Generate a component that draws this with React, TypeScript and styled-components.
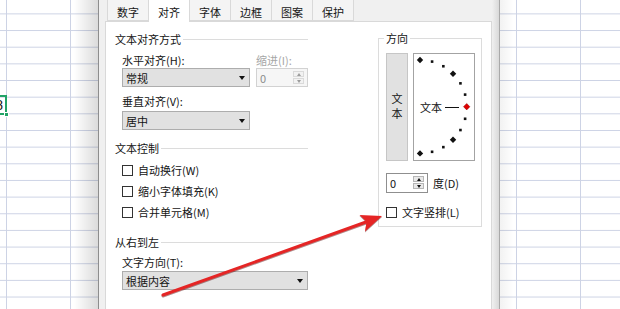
import React from "react";
import styled, { createGlobalStyle } from "styled-components";

const FONT = `"Noto Sans CJK SC", "Noto Sans", sans-serif`;
const GRID = "#cdd3e5";
const GREEN = "#21a366";

const GlobalStyle = createGlobalStyle`
  html, body { margin: 0; padding: 0; background: #fff; }
  body { font-family: ${FONT}; font-size: 11px; line-height: 16px; color: #141414; }
  * { box-sizing: border-box; }
`;

const Screen = styled.div`
  position: relative;
  display: flex;
  width: 620px;
  height: 309px;
  overflow: hidden;
`;

const colLines = (cols: number[]) =>
  `linear-gradient(to right, ${cols
    .map((c) => `transparent ${c}px, ${GRID} ${c}px, ${GRID} ${c + 1}px, transparent ${c + 1}px`)
    .join(", ")})`;

const Sheet = styled.div<{ $width?: number; $cols: number[]; $shade: string }>`
  position: relative;
  flex: ${(p) => (p.$width ? `0 0 ${p.$width}px` : "1")};
  height: 100%;
  overflow: hidden;
  background-color: #fff;
  background-image: ${(p) => p.$shade}, ${(p) => colLines(p.$cols)},
    linear-gradient(to bottom, ${GRID} 1px, transparent 1px);
  background-size: 100% 100%, 100% 100%, 100% 16.667px;
  background-repeat: no-repeat, no-repeat, repeat;
  background-position: 0 0, 0 0, 0 13.4px;
`;

const ActiveCell = styled.div`
  position: absolute;
  left: -12px;
  top: 95px;
  width: 19px;
  height: 20px;
  padding-right: 2px;
  border: 2px solid ${GREEN};
  font-family: "Liberation Sans", Arial, sans-serif;
  font-size: 14px;
  line-height: 16px;
  text-align: right;
`;

const FillHandle = styled.span`
  position: absolute;
  right: -4px;
  bottom: -4px;
  width: 5px;
  height: 5px;
  border: 1px solid #fff;
  background: ${GREEN};
`;

const Dialog = styled.div`
  flex: 0 0 402px;
  display: flex;
  flex-direction: column;
  padding: 0 7px 0 6px;
  border-left: 1px solid #8d8d8d;
  border-right: 1px solid #a9a9a9;
  background: linear-gradient(to right, #f0f0f0 393px, #d9d9d9 400px);
`;

const TabRow = styled.div`
  display: flex;
  height: 21px;
  padding-left: 2px;
`;

const Tab = styled.div<{ $active?: boolean }>`
  position: relative;
  z-index: ${(p) => (p.$active ? 1 : 0)};
  width: 42px;
  height: ${(p) => (p.$active ? 25 : 24)}px;
  margin: -3px 0 0 -1px;
  padding-top: 6px;
  border: 1px solid #d9d9d9;
  border-bottom: ${(p) => (p.$active ? "none" : "1px solid #d9d9d9")};
  background: ${(p) => (p.$active ? "#fff" : "#f4f4f4")};
  text-align: center;
  &:first-child {
    margin-left: 0;
  }
`;

const Panel = styled.div`
  flex: 1;
  width: 387px;
  display: grid;
  grid-template-columns: 193px 104px;
  column-gap: 70px;
  align-items: start;
  padding: 9px 0 0 9px;
  border: 1px solid #d9d9d9;
  border-bottom: none;
  background: #fff;
`;

const Column = styled.div`
  display: flex;
  flex-direction: column;
`;

const Heading = styled.div<{ $mt?: number }>`
  display: flex;
  align-items: center;
  height: 16px;
  margin-top: ${(p) => p.$mt ?? 0}px;
  white-space: nowrap;
  &::after {
    content: "";
    flex: 1;
    height: 1px;
    margin-left: 2px;
    background: #dcdcdc;
  }
`;

const Indent = styled.div`
  display: flex;
  flex-direction: column;
  padding-left: 7px;
`;

const FieldPair = styled.div`
  display: grid;
  grid-template-columns: 128px 52px;
  column-gap: 6px;
`;

const Label = styled.div<{ $mt?: number; $disabled?: boolean }>`
  height: 16px;
  margin-top: ${(p) => p.$mt ?? 0}px;
  color: ${(p) => (p.$disabled ? "#a6a6a6" : "inherit")};
  white-space: nowrap;
`;

const Select = styled.div<{ $w: number; $mt?: number }>`
  display: flex;
  align-items: center;
  justify-content: space-between;
  width: ${(p) => p.$w}px;
  height: 19px;
  margin-top: ${(p) => p.$mt ?? 0}px;
  padding: 0 4px 0 3px;
  border: 1px solid #adadad;
  background: #e1e1e1;
  &::after {
    content: "";
    border-left: 3.5px solid transparent;
    border-right: 3.5px solid transparent;
    border-top: 4px solid #111;
  }
`;

const Spin = styled.div<{ $w: number; $h: number; $disabled?: boolean }>`
  display: flex;
  align-items: center;
  justify-content: space-between;
  width: ${(p) => p.$w}px;
  height: ${(p) => p.$h}px;
  padding: 0 3px 0 3px;
  border: 1px solid ${(p) => (p.$disabled ? "#d2d2d2" : "#8f8f8f")};
  background: ${(p) => (p.$disabled ? "#f6f6f6" : "#fff")};
  color: ${(p) => (p.$disabled ? "#8c8c8c" : "inherit")};
`;

const Steppers = styled.div`
  display: flex;
  flex-direction: column;
  gap: 1px;
`;

const Step = styled.div<{ $down?: boolean; $disabled?: boolean }>`
  display: flex;
  align-items: center;
  justify-content: center;
  width: 11px;
  height: 6px;
  border: 1px solid ${(p) => (p.$disabled ? "#dadada" : "#b5b5b5")};
  background: ${(p) => (p.$disabled ? "#f2f2f2" : "#e9e9e9")};
  &::before {
    content: "";
    border-left: 2.5px solid transparent;
    border-right: 2.5px solid transparent;
    ${(p) => (p.$down ? "border-top" : "border-bottom")}: 3px solid
      ${(p) => (p.$disabled ? "#9c9c9c" : "#111")};
  }
`;

const CheckRow = styled.div<{ $mt?: number }>`
  display: flex;
  align-items: center;
  gap: 5px;
  height: 16px;
  margin-top: ${(p) => p.$mt ?? 0}px;
  white-space: nowrap;
`;

const Box = styled.span`
  flex: none;
  width: 11px;
  height: 11px;
  border: 1px solid #333;
  background: #fff;
`;

const Group = styled.div`
  display: flex;
  flex-direction: column;
  margin-top: 7px;
  padding: 0 6px 6px 7px;
  border: 1px solid #dcdcdc;
`;

const Legend = styled.div`
  align-self: flex-start;
  height: 16px;
  margin: -9px 0 0 -2px;
  padding: 0 2px;
  background: #fff;
`;

const OrientRow = styled.div`
  display: flex;
  gap: 5px;
  height: 108px;
  margin-top: 7px;
`;

const VerticalText = styled.div`
  display: flex;
  flex-direction: column;
  align-items: center;
  justify-content: center;
  width: 22px;
  padding-bottom: 2px;
  border: 1px solid #c6c6c6;
  background: #e1e1e1;
  line-height: 15px;
`;

const Dial = styled.div`
  position: relative;
  display: flex;
  align-items: center;
  width: 62px;
  padding-left: 6px;
  border: 1px solid #a3a3a3;
  background: #fff;
`;

const DialMarks = styled.svg`
  position: absolute;
  left: 0;
  top: 0;
`;

const Needle = styled.span`
  width: 14px;
  height: 1px;
  margin-left: 3px;
  background: #111;
`;

const DegreeRow = styled.div`
  display: flex;
  align-items: center;
  gap: 5px;
  height: 20px;
  margin-top: 11.5px;
`;

const Overlay = styled.svg`
  position: absolute;
  left: 0;
  top: 0;
  pointer-events: none;
  filter: drop-shadow(0.5px 1px 0.6px rgba(80, 0, 0, 0.45));
`;

const tabs = ["数字", "对齐", "字体", "边框", "图案", "保护"];

const marks = [90, 75, 60, 45, 30, 15, 0, -15, -30, -45, -60, -75, -90].map((deg) => {
  const a = (deg * Math.PI) / 180;
  return { deg, x: 6 + 46.7 * Math.cos(a), y: 52.7 - 46.7 * Math.sin(a) };
});

const SpinBox = ({ w, h, disabled }: { w: number; h: number; disabled?: boolean }) => (
  <Spin $w={w} $h={h} $disabled={disabled}>
    <span>0</span>
    <Steppers>
      <Step $disabled={disabled} />
      <Step $down $disabled={disabled} />
    </Steppers>
  </Spin>
);

export default function App() {
  return (
    <Screen>
      <GlobalStyle />
      <Sheet
        $width={98}
        $cols={[6, 70]}
        $shade="linear-gradient(to right, rgba(0,0,0,0) 74px, rgba(0,0,0,0.14) 98px)"
      >
        <ActiveCell>
          8
          <FillHandle />
        </ActiveCell>
      </Sheet>

      <Dialog>
        <TabRow>
          {tabs.map((t) => (
            <Tab key={t} $active={t === "对齐"}>
              {t}
            </Tab>
          ))}
        </TabRow>
        <Panel>
          <Column>
            <Heading>文本对齐方式</Heading>
            <Indent>
              <FieldPair>
                <Label $mt={5}>水平对齐(H):</Label>
                <Label $mt={5} $disabled>
                  缩进(I):
                </Label>
                <Select $w={128}>常规</Select>
                <SpinBox w={52} h={19} disabled />
              </FieldPair>
              <Label $mt={6}>垂直对齐(V):</Label>
              <Select $w={128} $mt={2}>
                居中
              </Select>
            </Indent>

            <Heading $mt={10}>文本控制</Heading>
            <Indent>
              <CheckRow $mt={6}>
                <Box />
                自动换行(W)
              </CheckRow>
              <CheckRow $mt={5}>
                <Box />
                缩小字体填充(K)
              </CheckRow>
              <CheckRow $mt={5}>
                <Box />
                合并单元格(M)
              </CheckRow>
            </Indent>

            <Heading $mt={14}>从右到左</Heading>
            <Indent>
              <Label $mt={4}>文字方向(T):</Label>
              <Select $w={186} $mt={1}>
                根据内容
              </Select>
            </Indent>
          </Column>

          <Group>
            <Legend>方向</Legend>
            <OrientRow>
              <VerticalText>
                <span>文</span>
                <span>本</span>
              </VerticalText>
              <Dial>
                <DialMarks width={60} height={106} viewBox="0 0 60 106">
                  {marks.map(({ deg, x, y }) =>
                    deg % 45 === 0 ? (
                      <polygon
                        key={deg}
                        points={`${x},${y - 3.2} ${x + 3.2},${y} ${x},${y + 3.2} ${x - 3.2},${y}`}
                        fill={deg === 0 ? "#e00000" : "#111"}
                        stroke={deg === 0 ? "#8a0000" : "none"}
                        strokeWidth={0.5}
                      />
                    ) : (
                      <rect key={deg} x={x - 1.3} y={y - 1.3} width={2.6} height={2.6} fill="#111" />
                    )
                  )}
                </DialMarks>
                <span>文本</span>
                <Needle />
              </Dial>
            </OrientRow>
            <DegreeRow>
              <SpinBox w={42} h={20} />
              <span>度(D)</span>
            </DegreeRow>
            <CheckRow $mt={11.5}>
              <Box />
              文字竖排(L)
            </CheckRow>
          </Group>
        </Panel>
      </Dialog>

      <Sheet
        $cols={[16, 80]}
        $shade="linear-gradient(to right, rgba(0,0,0,0.05), rgba(0,0,0,0) 14px)"
      />

      <Overlay width={620} height={309} viewBox="0 0 620 309">
        <line x1={163} y1={295} x2={366} y2={222} stroke="#e52525" strokeWidth={3} strokeLinecap="round" />
        <polygon points="382,216 359.5,215 366.5,221.8 365,231.5" fill="#e52525" />
      </Overlay>
    </Screen>
  );
}
